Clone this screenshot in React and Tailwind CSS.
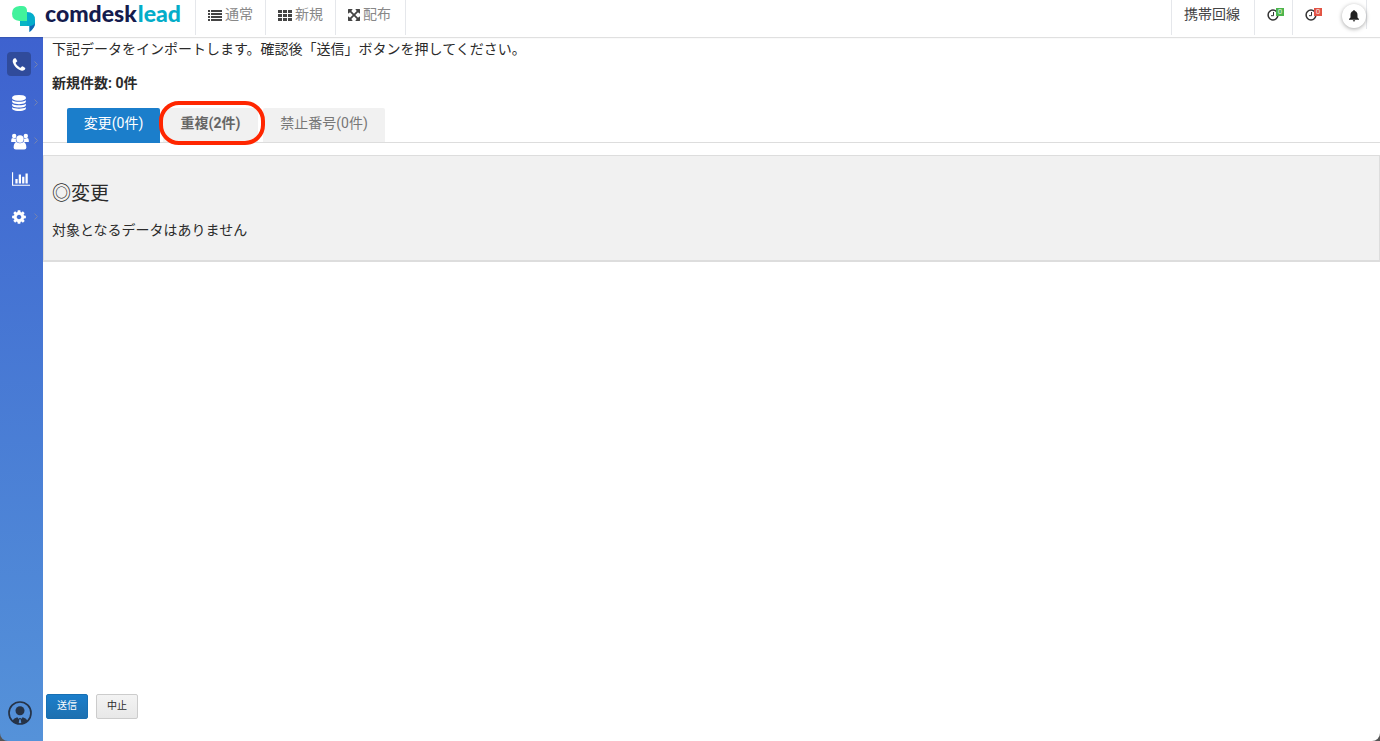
import React from "react";

const paths = {
  phone:
    "M1600 1240q0 27-10 70.5t-21 68.5q-21 50-122 106-94 51-186 51-27 0-52.5-3.5t-57.5-12.5-47.5-14.5-55.5-20.5-49-18q-98-35-175-83-128-79-264.5-215.5t-215.5-264.5q-48-77-83-175-3-9-18-49t-20.5-55.5-14.5-47.5-12.5-57.5-3.5-52.5q0-92 51-186 56-101 106-122 25-11 68.5-21t70.5-10q14 0 21 3 18 6 53 76 11 19 30 54t35 63.5 31 53.5q3 4 17.5 25t21.5 35.5 7 28.5q0 20-28.5 50t-62 55-62 53-28.5 46q0 9 5 22.5t8.5 20.5 14 24 11.5 19q76 137 174 235t235 174q2 1 19 11.5t24 14 20.5 8.5 22.5 5q18 0 46-28.5t53-62 55-62 50-28.5q14 0 28.5 7t35.5 21.5 25 17.5q25 15 53.5 31t63.5 35 54 30q70 35 76 53 3 7 3 21z",
  database:
    "M896 768q237 0 443-43t325-127v170q0 69-103 128t-280 93.5-385 34.5-385-34.5-280-93.5-103-128v-170q119 84 325 127t443 43zm0 768q237 0 443-43t325-127v170q0 69-103 128t-280 93.5-385 34.5-385-34.5-280-93.5-103-128v-170q119 84 325 127t443 43zm0-384q237 0 443-43t325-127v170q0 69-103 128t-280 93.5-385 34.5-385-34.5-280-93.5-103-128v-170q119 84 325 127t443 43zm0-1152q208 0 385 34.5t280 93.5 103 128v128q0 69-103 128t-280 93.5-385 34.5-385-34.5-280-93.5-103-128v-128q0-69 103-128t280-93.5 385-34.5z",
  chart:
    "M640 896v512h-256v-512h256zm384-512v1024h-256v-1024h256zm1024 1152v128h-2048v-1536h128v1408h1920zm-640-896v768h-256v-768h256zm384-384v1152h-256v-1152h256z",
  cog: "M1152 896q0-106-75-181t-181-75-181 75-75 181 75 181 181 75 181-75 75-181zm512-109v222q0 12-8 23t-20 13l-185 28q-19 54-39 91 35 50 107 138 10 12 10 25t-9 23q-27 37-99 108t-94 71q-12 0-26-9l-138-108q-44 23-91 38-16 136-29 186-7 28-36 28h-222q-14 0-24.5-8.5t-11.5-21.5l-28-184q-49-16-90-37l-141 107q-10 9-25 9-14 0-25-11-126-114-165-168-7-10-7-23 0-12 8-23 15-21 51-66.5t54-70.5q-27-50-41-99l-183-27q-13-2-21-12.5t-8-23.5v-222q0-12 8-23t19-13l186-28q14-46 39-92-40-57-107-138-10-12-10-24 0-10 9-23 26-36 98.5-107.5t94.5-71.5q13 0 26 10l138 107q44-23 91-38 16-136 29-186 7-28 36-28h222q14 0 24.5 8.5t11.5 21.5l28 184q49 16 90 37l142-107q9-9 24-9 13 0 25 10 129 119 165 170 7 8 7 22 0 12-8 23-15 21-51 66.5t-54 70.5q26 50 41 98l183 28q13 2 21 12.5t8 23.5z",
  arrows:
    "M1411 541l-355 355 355 355 144-144q29-31 70-14 39 17 39 59v448q0 26-19 45t-45 19h-448q-42 0-59-40-17-39 14-69l144-144-355-355-355 355 144 144q31 30 14 69-17 40-59 40h-448q-26 0-45-19t-19-45v-448q0-42 40-59 39-17 69 14l144 144 355-355-355-355-144 144q-19 19-45 19-12 0-24-5-40-17-40-59v-448q0-26 19-45t45-19h448q42 0 59 40 17 39-14 69l-144 144 355 355 355-355-144-144q-31-30-14-69 17-40 59-40h448q26 0 45 19t19 45v448q0 42-39 59-13 5-25 5-26 0-45-19z",
};

function Glyph({ name, box = "0 0 1792 1792", className }) {
  return (
    <svg viewBox={box} className={className} fill="currentColor" aria-hidden="true">
      <path d={paths[name]} />
    </svg>
  );
}

function UsersIcon() {
  return (
    <svg viewBox="0 0 18 17" className="ml-px h-[17px] w-[18px]" fill="currentColor" aria-hidden="true">
      <circle cx="3.2" cy="3" r="2.2" />
      <circle cx="14.8" cy="3" r="2.2" />
      <path d="M.2 9V7.2Q.2 5 2 5q1.500 1 3 .6Q4.400 8 5.800 9H.2zM17.800 9V7.200Q17.800 5 16 5q-1.500 1-3 .6Q13.600 8 12.200 9h5.600z" />
      <circle cx="9" cy="6" r="3.700" />
      <path d="M5.500 9Q9 11.500 12.500 9q2.700.7 2.900 5.500 0 2-2.200 2H4.800q-2.200 0-2.200-2Q2.800 9.700 5.500 9z" />
    </svg>
  );
}

function ListIcon() {
  return (
    <svg viewBox="0 0 14 11" className="h-[11px] w-[14px]" fill="currentColor" aria-hidden="true">
      <path d="M0 0h2v2H0zM0 3h2v2H0zM0 6h2v2H0zM0 9h2v2H0zM3 0h11v2H3zM3 3h11v2H3zM3 6h11v2H3zM3 9h11v2H3z" />
    </svg>
  );
}

function GridIcon() {
  return (
    <svg viewBox="0 0 14 11" className="h-[11px] w-[14px]" fill="currentColor" aria-hidden="true">
      <path d="M0 0h4v3H0zM5 0h4v3H5zM10 0h4v3h-4zM0 4h4v3H0zM5 4h4v3H5zM10 4h4v3h-4zM0 8h4v3H0zM5 8h4v3H5zM10 8h4v3h-4z" />
    </svg>
  );
}

function LogoMark() {
  return (
    <svg viewBox="0 0 24 27" className="h-[27px] w-6" aria-hidden="true">
      <path d="M15 6q8 0 8 8v3.500q0 4-5.500 8.500V20H8v-5h7z" fill="#04adcb" />
      <path d="M17.500 20Q22 19.800 23 16.500 23.200 21.500 17.500 26z" fill="#1064b4" />
      <path d="M7.500 0H10q5 0 5 5v10H7.500Q0 14.500 0 7.500T7.500 0z" fill="#42f29c" />
      <path d="M8 20q0-4.500 2.500-5H15v5z" fill="#08b5c4" />
    </svg>
  );
}

const topNav = [
  { label: "通常", icon: <ListIcon /> },
  { label: "新規", icon: <GridIcon /> },
  { label: "配布", icon: <Glyph name="arrows" box="128 128 1536 1536" className="size-3" /> },
];

const sideNav = [
  { label: "電話", icon: <Glyph name="phone" className="size-4" />, active: true, more: true },
  { label: "データ", icon: <Glyph name="database" className="size-4" />, more: true },
  { label: "ユーザー", icon: <UsersIcon />, more: true },
  { label: "レポート", icon: <Glyph name="chart" box="0 0 2048 1792" className="ml-1 h-4 w-[18px]" /> },
  { label: "設定", icon: <Glyph name="cog" className="size-4" />, more: true },
];

function ClockButton({ label, badgeClass }) {
  return (
    <button type="button" aria-label={label} className="flex h-[35px] w-[38px] shrink-0 border-l border-gray-200 pt-2 pl-3 text-[#333]">
      <svg viewBox="0 0 12 12" className="mt-px size-3 shrink-0 fill-none stroke-current" aria-hidden="true">
        <circle cx="6" cy="6" r="4.900" strokeWidth="1.500" />
        <path d="M6.500 3v3.700H4" strokeWidth="1" />
      </svg>
      <span className={`-ml-[3px] h-2 w-2 text-center text-[8px] leading-[8px] text-white/80 ${badgeClass}`}>0</span>
    </button>
  );
}

function Header() {
  return (
    <header className="relative z-10 flex h-[37px] items-start bg-white shadow-[0_1px_1px_rgba(0,0,0,0.12)]">
      <a href="#home" className="flex w-[195px] shrink-0 pl-3">
        <span className="mt-[6px]"><LogoMark /></span>
        <span className="ml-[9px] flex gap-px font-[Lato,sans-serif] text-[23px] leading-[26px] font-black text-[#141b4d]">
          <span>comdesk</span>
          <span className="text-[#04adc9]">lead</span>
        </span>
      </a>
      <nav className="flex h-[35px] border-r border-gray-200">
        {topNav.map((item) => (
          <a key={item.label} href="#list" className="flex h-[35px] min-w-[70px] items-start gap-[3px] border-l border-gray-200 pl-3 text-[#888]">
            <span className="flex h-[30px] items-center text-[#444]">{item.icon}</span>
            <span className="leading-7">{item.label}</span>
          </a>
        ))}
      </nav>
      <div className="ml-auto flex">
        <a href="#line" className="h-[35px] w-[83px] border-l border-gray-200 pl-3 leading-7 text-[#444]">携帯回線</a>
        <ClockButton label="予定" badgeClass="bg-[#4cb54c]" />
        <ClockButton label="期限切れ" badgeClass="bg-[#e25445]" />
        <div className="mr-[13px] flex h-[29px] w-[37px] items-start justify-end border-r border-gray-200">
          <button type="button" aria-label="通知" className="mt-1 flex size-6 items-center justify-center rounded-full bg-white text-[#222] shadow-[0_1px_4px_rgba(0,0,0,0.35)]">
            <svg viewBox="0 0 10 12" className="h-3 w-2.5" fill="currentColor" aria-hidden="true">
              <path d="M5 0q.8 0 .9.9Q8.500 1.600 8.500 5v2.500L10 9v.7H0V9l1.500-1.500V5Q1.500 1.600 4.100.9 4.200 0 5 0zM3.800 10.300h2.400Q6 11.500 5 11.500t-1.200-1.200z" />
            </svg>
          </button>
        </div>
      </div>
    </header>
  );
}

function Sidebar() {
  return (
    <aside className="flex w-[43px] shrink-0 flex-col rounded-bl-lg bg-linear-to-b from-[#3e62cf] to-[#5592d9] pt-[15px] pb-4">
      <nav className="flex flex-col gap-[14px]">
        {sideNav.map((item) => (
          <a key={item.label} href="#menu" aria-label={item.label} className="flex h-6 items-center pl-[7px] text-white">
            <span className={`flex size-6 shrink-0 items-center justify-center rounded pt-[2px] ${item.active ? "bg-[#304b9b]" : ""}`}>{item.icon}</span>
            {item.more && (
              <svg viewBox="0 0 4 7" className="ml-[3px] h-[7px] w-1 shrink-0 fill-none stroke-[#7583b0]" aria-hidden="true">
                <path d="M.5.5l3 3-3 3" />
              </svg>
            )}
          </a>
        ))}
      </nav>
      <button type="button" aria-label="アカウント" className="mt-auto ml-2 size-6 text-[#263347]">
        <svg viewBox="0 0 24 24" className="size-6" aria-hidden="true">
          <circle cx="12" cy="12" r="11" fill="none" stroke="currentColor" strokeWidth="1.700" />
          <circle cx="12" cy="9.800" r="4.500" fill="currentColor" />
          <path d="M4.500 19.500Q6 17 9.300 16.300l2 2.200-.8 4.500Q7 22.700 4.500 19.500zM19.500 19.500Q18 17 14.700 16.300l-2 2.200.8 4.500q3.500-.3 6-3.500zM11 17h2l-.4 1.500h-1.200z" fill="currentColor" />
        </svg>
      </button>
    </aside>
  );
}

function Tabs() {
  return (
    <div role="tablist" className="mt-2 flex h-10 items-end border-b border-[#ddd] pl-6">
      <button type="button" role="tab" aria-selected="true" className="-mb-px h-[35px] w-[93px] rounded-t-xs bg-[#1b7ecb] pb-1 text-white">変更(0件)</button>
      <div className="relative mr-[5px] ml-[3px]">
        <button type="button" role="tab" aria-selected="false" className="block h-[34px] w-[95px] rounded-t-xs bg-[#f1f1f1] pb-1 font-bold text-[#666]">重複(2件)</button>
        <span className="pointer-events-none absolute -top-[7px] -right-[7px] -bottom-[3px] -left-[4px] rounded-[20px] border-4 border-[#ff2600]" />
      </div>
      <button type="button" role="tab" aria-selected="false" className="h-[34px] w-[122px] rounded-t-xs bg-[#f1f1f1] pb-1 text-[#777]">禁止番号(0件)</button>
    </div>
  );
}

export default function App() {
  return (
    <div className="flex min-h-screen flex-col bg-[#555] font-[Roboto,'Noto_Sans_CJK_JP',sans-serif] text-[14px] text-[#2b2b2b]">
      <Header />
      <div className="flex grow">
        <Sidebar />
        <main className="flex min-w-0 grow flex-col rounded-br-lg bg-white">
          <p className="pl-[9px] leading-6">下記データをインポートします。確認後「送信」ボタンを押してください。</p>
          <p className="mt-[10px] pl-[9px] leading-6 font-bold">新規件数: 0件</p>
          <Tabs />
          <section className="mt-3 border border-b-2 border-[#ddd] bg-[#f1f1f1] px-2 pt-6 pb-[18px]">
            <h2 className="text-[19px] leading-7">◎変更</h2>
            <p className="mt-[10px] leading-6">対象となるデータはありません</p>
          </section>
          <div className="mt-auto flex gap-2 pb-[22px] pl-[3px] text-[10px]">
            <button type="submit" className="h-[25px] w-[42px] rounded-xs border border-[#176fb3] bg-linear-to-b from-[#1b7ecb] to-[#1d70b0] pb-[2px] text-white">送信</button>
            <button type="button" className="h-[25px] w-[42px] rounded-xs border border-[#ccc] bg-linear-to-b from-[#f3f3f3] to-[#e8e8e8] pb-[2px]">中止</button>
          </div>
        </main>
      </div>
    </div>
  );
}
